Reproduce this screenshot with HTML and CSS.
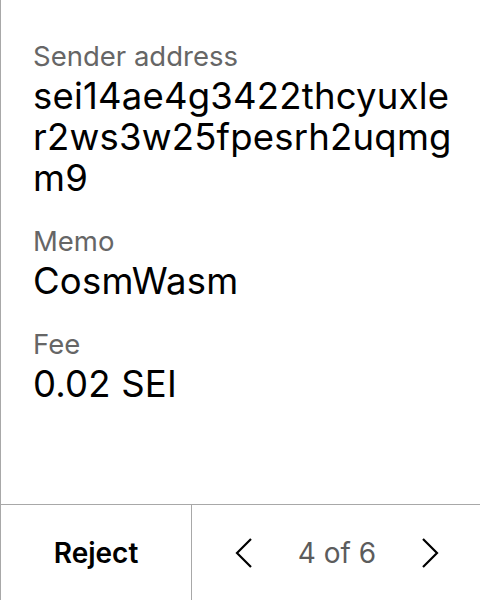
FILE: index.html
```html
<!DOCTYPE html>
<html>
<head>
<meta charset="utf-8">
<link rel="stylesheet" href="styles.css">
</head>
<body>
<div class="screen">
  <div class="content">
    <div class="field">
      <div class="label">Sender address</div>
      <div class="value">sei14ae4g3422thcyuxle<br>r2ws3w25fpesrh2uqmg<br>m9</div>
    </div>
    <div class="field">
      <div class="label">Memo</div>
      <div class="value">CosmWasm</div>
    </div>
    <div class="field">
      <div class="label">Fee</div>
      <div class="value">0.02 SEI</div>
    </div>
  </div>
  <div class="footer">
    <div class="reject">Reject</div>
    <div class="pager">
      <svg class="chev" width="20" height="32" viewBox="0 0 20 32"><path d="M17 2 L3 16 L17 30" fill="none" stroke="#000" stroke-width="2.2"/></svg>
      <span class="count">4 of 6</span>
      <svg class="chev" width="20" height="32" viewBox="0 0 20 32"><path d="M3 2 L17 16 L3 30" fill="none" stroke="#000" stroke-width="2.2"/></svg>
    </div>
  </div>
</div>
</body>
</html>
```

FILE: styles.css
```css
html, body {
  margin: 0;
  padding: 0;
  background: #fff;
}
.screen {
  width: 480px;
  height: 600px;
  box-sizing: border-box;
  border-left: 1px solid #a8a8a8;
  display: flex;
  flex-direction: column;
  font-family: Inter, "Noto Sans", sans-serif;
  color: #000;
}
.content {
  flex: 1;
  padding: 40px 20px 0 32px;
  display: flex;
  flex-direction: column;
  gap: 26px;
}
.label {
  font-size: 27.5px;
  line-height: 32px;
  color: #666;
}
.value {
  font-size: 36.5px;
  line-height: 41px;
  margin-top: 4px;
  letter-spacing: 0.2px;
}
.footer {
  height: 96px;
  box-sizing: border-box;
  border-top: 1px solid #a8a8a8;
  display: grid;
  grid-template-columns: 191px 1fr;
}
.reject {
  border-right: 1px solid #a8a8a8;
  display: flex;
  align-items: center;
  justify-content: center;
  font-size: 28px;
  font-weight: 600;
}
.pager {
  display: flex;
  align-items: center;
  justify-content: space-between;
  padding: 0 40px 0 42px;
}
.count {
  font-size: 28px;
  color: #5c5c5c;
}
.chev {
  display: block;
}
```
